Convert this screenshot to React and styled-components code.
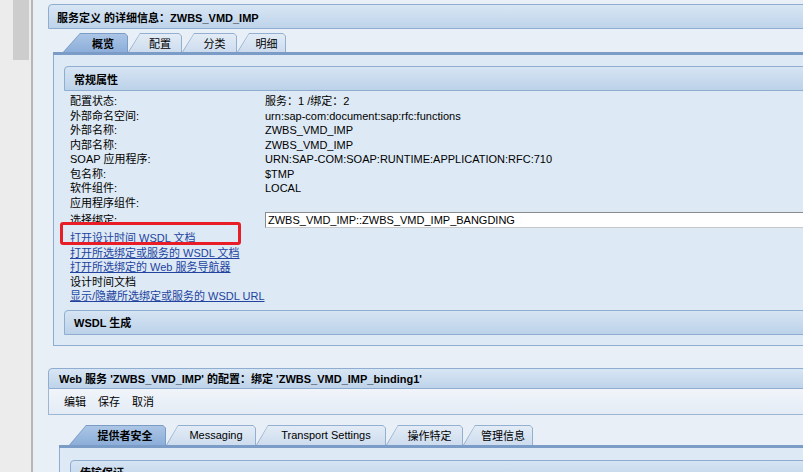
import { Fragment } from 'react';
import styled, { createGlobalStyle } from 'styled-components';

const Global = createGlobalStyle`
  html, body { margin: 0; padding: 0; overflow: hidden; }
  body {
    font-family: "Liberation Sans", "Noto Sans CJK SC", sans-serif;
    font-size: 11px;
    color: #000;
  }
`;

const Page = styled.div`
  display: flex;
  width: 803px;
  height: 472px;
  overflow: hidden;
`;

const Rail = styled.div`
  width: 33px;
  flex-shrink: 0;
  display: flex;
  background: #ececec;
  border-right: 2px solid #b6b6b6;
  box-sizing: border-box;
`;

const Gutter = styled.div`
  width: 13px;
`;

const Track = styled.div`
  width: 16px;
`;

const Thumb = styled.div`
  height: 60px;
  background: #cdcdcd;
`;

const Main = styled.div`
  flex: 1;
  min-width: 0;
  background: #e9eff7;
  padding: 4px 0 0 15px;
  overflow: hidden;
`;

const Panel = styled.div`
  margin-right: -20px;
  margin-top: ${(p) => p.$gap || 0}px;
`;

const PanelHeader = styled.div`
  box-sizing: border-box;
  height: ${(p) => p.$h || 25}px;
  display: flex;
  align-items: center;
  padding-left: ${(p) => p.$pad || 8}px;
  border: 1px solid #8fadd0;
  border-top-left-radius: 4px;
  background: linear-gradient(#d8e6f4, #bed3ea);
  font-weight: bold;
  white-space: nowrap;
`;

const Toolbar = styled.div`
  box-sizing: border-box;
  height: 26px;
  display: flex;
  align-items: center;
  gap: 12px;
  padding-left: 15px;
  border: 1px solid #9db6d4;
  border-top: none;
  background: linear-gradient(#f1f5fa, #e3ebf5);
`;

const ToolItem = styled.span`
  cursor: pointer;
`;

const PanelBody = styled.div`
  padding: ${(p) => p.$top}px 0 0 ${(p) => p.$left}px;
`;

const TabStrip = styled.div`
  display: flex;
  padding-left: 10px;
  height: ${(p) => p.$h}px;
`;

const Tab = styled.div`
  box-sizing: border-box;
  width: ${(p) => p.$w}px;
  height: 100%;
  padding: 1px 1px 0 1px;
  background: ${(p) => (p.$active ? '#7a9cc6' : '#94b0d0')};
  clip-path: polygon(${(p) => p.$s}px 0, calc(100% - 3px) 0, 100% 3px, 100% 100%, 0 100%);
`;

const TabFace = styled.div`
  height: 100%;
  display: flex;
  align-items: center;
  justify-content: center;
  padding-left: ${(p) => p.$s}px;
  padding-right: 2px;
  box-sizing: border-box;
  background: ${(p) =>
    p.$active ? 'linear-gradient(#abc5e5, #8caed9)' : 'linear-gradient(#e3ecf6, #cddcee)'};
  font-weight: ${(p) => (p.$active ? 'bold' : 'normal')};
  clip-path: polygon(${(p) => p.$s - 1}px 0, calc(100% - 2px) 0, 100% 2px, 100% 100%, 0 100%);
  white-space: nowrap;
`;

const TabBand = styled.div`
  height: 3px;
  background: #7b9cc6;
`;

const Content = styled.div`
  position: relative;
  border-left: 1px solid #8fadd0;
  border-bottom: 1px solid #8fadd0;
  background: #dde9f4;
  padding: ${(p) => p.$top}px 0 10px 10px;
`;

const Section = styled.div`
  box-sizing: border-box;
  height: 25px;
  display: flex;
  align-items: center;
  padding-left: 9px;
  margin-top: ${(p) => p.$gap || 0}px;
  border: 1px solid #8fadd0;
  border-top-left-radius: 4px;
  background: linear-gradient(#d6e4f3, #bcd2e9);
  font-weight: bold;
`;

const Fields = styled.div`
  display: grid;
  grid-template-columns: 195px 1fr;
  padding-left: 6px;
  margin-top: 3px;
  line-height: 14.5px;
  white-space: nowrap;
`;

const SelectRow = styled.div`
  grid-column: 1 / -1;
  display: grid;
  grid-template-columns: 195px 1fr;
  align-items: center;
  margin-top: 2px;
  height: 16px;
`;

const Select = styled.div`
  box-sizing: border-box;
  height: 16px;
  line-height: 14px;
  padding-left: 2px;
  background: #fff;
  border: 1px solid #8a8a8a;
  border-bottom-color: #c9c9c9;
  border-right: none;
`;

const Links = styled.div`
  padding-left: 6px;
  margin-top: 3px;
  line-height: 14.6px;
  white-space: nowrap;
`;

const Link = styled.a`
  display: block;
  width: max-content;
  color: #23439f;
  text-decoration: underline;
  cursor: pointer;
`;

const Plain = styled.div``;

const Mark = styled.div`
  position: absolute;
  left: 6px;
  top: 167px;
  width: 181px;
  height: 23px;
  box-sizing: border-box;
  border: 3px solid #e81d25;
  border-radius: 3px;
  pointer-events: none;
`;

const fields = [
  ['配置状态:', '服务：1 /绑定：2'],
  ['外部命名空间:', 'urn:sap-com:document:sap:rfc:functions'],
  ['外部名称:', 'ZWBS_VMD_IMP'],
  ['内部名称:', 'ZWBS_VMD_IMP'],
  ['SOAP 应用程序:', 'URN:SAP-COM:SOAP:RUNTIME:APPLICATION:RFC:710'],
  ['包名称:', '$TMP'],
  ['软件组件:', 'LOCAL'],
  ['应用程序组件:', ''],
];

const tabs1 = [
  { label: '概览', w: 65, active: true },
  { label: '配置', w: 54 },
  { label: '分类', w: 55 },
  { label: '明细', w: 49 },
];

const tabs2 = [
  { label: '提供者安全', w: 97, active: true },
  { label: 'Messaging', w: 90 },
  { label: 'Transport Settings', w: 130 },
  { label: '操作特定', w: 77 },
  { label: '管理信息', w: 70 },
];

function Tabs({ items, h }) {
  return (
    <>
      <TabStrip $h={h}>
        {items.map((t) => {
          const s = t.active ? 17 : 12;
          return (
            <Tab key={t.label} $w={t.w} $s={s} $active={t.active}>
              <TabFace $s={s} $active={t.active}>{t.label}</TabFace>
            </Tab>
          );
        })}
      </TabStrip>
      <TabBand />
    </>
  );
}

export default function App() {
  return (
    <Page>
      <Global />
      <Rail>
        <Gutter />
        <Track>
          <Thumb />
        </Track>
      </Rail>
      <Main>
        <Panel>
          <PanelHeader>服务定义 的详细信息：ZWBS_VMD_IMP</PanelHeader>
          <PanelBody $top={4} $left={5}>
            <Tabs items={tabs1} h={19} />
            <Content $top={11}>
              <Section>常规属性</Section>
              <Fields>
                {fields.map(([k, v]) => (
                  <Fragment key={k}>
                    <span>{k}</span>
                    <span>{v}</span>
                  </Fragment>
                ))}
                <SelectRow>
                  <span>选择绑定:</span>
                  <Select>ZWBS_VMD_IMP::ZWBS_VMD_IMP_BANGDING</Select>
                </SelectRow>
              </Fields>
              <Links>
                <Link>打开设计时间 WSDL 文档</Link>
                <Link>打开所选绑定或服务的 WSDL 文档</Link>
                <Link>打开所选绑定的 Web 服务导航器</Link>
                <Plain>设计时间文档</Plain>
                <Link>显示/隐藏所选绑定或服务的 WSDL URL</Link>
              </Links>
              <Section $gap={6}>WSDL 生成</Section>
              <Mark />
            </Content>
          </PanelBody>
        </Panel>

        <Panel $gap={22}>
          <PanelHeader $h={21} $pad={10}>
            Web 服务 'ZWBS_VMD_IMP' 的配置：绑定 'ZWBS_VMD_IMP_binding1'
          </PanelHeader>
          <Toolbar>
            <ToolItem>编辑</ToolItem>
            <ToolItem>保存</ToolItem>
            <ToolItem>取消</ToolItem>
          </Toolbar>
          <PanelBody $top={10} $left={11}>
            <Tabs items={tabs2} h={20} />
            <Content $top={12}>
              <Section>传输保证</Section>
            </Content>
          </PanelBody>
        </Panel>
      </Main>
    </Page>
  );
}
